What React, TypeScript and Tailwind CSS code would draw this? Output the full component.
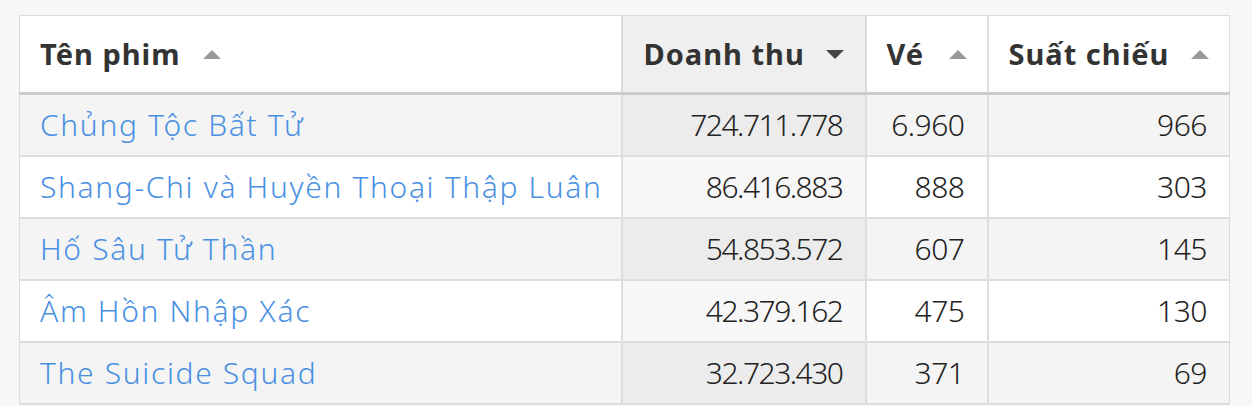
import React from 'react';

type Film = { name: string; revenue: string; tickets: string; shows: string };

const films: Film[] = [
  { name: 'Chủng Tộc Bất Tử', revenue: '724.711.778', tickets: '6.960', shows: '966' },
  { name: 'Shang-Chi và Huyền Thoại Thập Luân', revenue: '86.416.883', tickets: '888', shows: '303' },
  { name: 'Hố Sâu Tử Thần', revenue: '54.853.572', tickets: '607', shows: '145' },
  { name: 'Âm Hồn Nhập Xác', revenue: '42.379.162', tickets: '475', shows: '130' },
  { name: 'The Suicide Squad', revenue: '32.723.430', tickets: '371', shows: '69' },
];

const SortIcon = ({ dir }: { dir: 'up' | 'down' }) =>
  dir === 'up' ? (
    <span className="ml-auto inline-block h-0 w-0 border-x-[9px] border-b-[9px] border-x-transparent border-b-[#999]" />
  ) : (
    <span className="ml-auto inline-block h-0 w-0 border-x-[9px] border-t-[9px] border-x-transparent border-t-[#444]" />
  );

export default function App() {
  return (
    <div className="min-h-[406px] w-full bg-[#f7f7f7] pl-[19px] pt-[15px] font-['Noto_Sans',sans-serif]">
      <table className="w-[1211px] table-fixed border-collapse border border-[#ddd] bg-white">
        <colgroup>
          <col className="w-[602px]" />
          <col className="w-[244px]" />
          <col className="w-[122px]" />
          <col className="w-[242px]" />
        </colgroup>
        <thead>
          <tr className="h-[78px] border-b-[3px] border-b-[#ccc] text-[29px] font-bold tracking-[1px] text-[#333]">
            <th className="border-r-2 border-[#ddd] pl-[20px] pr-[22px] text-left">
              <div className="flex items-center gap-[22px]">
                <span>Tên phim</span>
                <span className="inline-block h-0 w-0 border-x-[9px] border-b-[9px] border-x-transparent border-b-[#999]" />
              </div>
            </th>
            <th className="border-r-2 border-[#ddd] bg-[#efefef] px-[21px] text-left">
              <div className="flex items-center">
                <span>Doanh thu</span>
                <SortIcon dir="down" />
              </div>
            </th>
            <th className="border-r-2 border-[#ddd] px-[20px] text-left">
              <div className="flex items-center">
                <span>Vé</span>
                <SortIcon dir="up" />
              </div>
            </th>
            <th className="px-[20px] text-left">
              <div className="flex items-center">
                <span>Suất chiếu</span>
                <SortIcon dir="up" />
              </div>
            </th>
          </tr>
        </thead>
        <tbody className="text-[30px] font-light text-[#222]">
          {films.map((f, i) => {
            const odd = i % 2 === 0;
            return (
              <tr key={f.name} className={`h-[62px] border-b-2 border-[#ddd] ${odd ? 'bg-[#f4f4f4]' : 'bg-white'}`}>
                <td className="border-r-2 border-[#ddd] pl-[20px] pr-[4px] text-left tracking-[1.65px] text-[#4a90e2]">{f.name}</td>
                <td className={`border-r-2 border-[#ddd] px-[22px] text-right tracking-[-1.5px] ${odd ? 'bg-[#ececec]' : 'bg-[#f7f7f7]'}`}>{f.revenue}</td>
                <td className="border-r-2 border-[#ddd] px-[22px] text-right tracking-[-0.5px]">{f.tickets}</td>
                <td className="px-[22px] text-right tracking-[-0.5px]">{f.shows}</td>
              </tr>
            );
          })}
        </tbody>
      </table>
    </div>
  );
}
